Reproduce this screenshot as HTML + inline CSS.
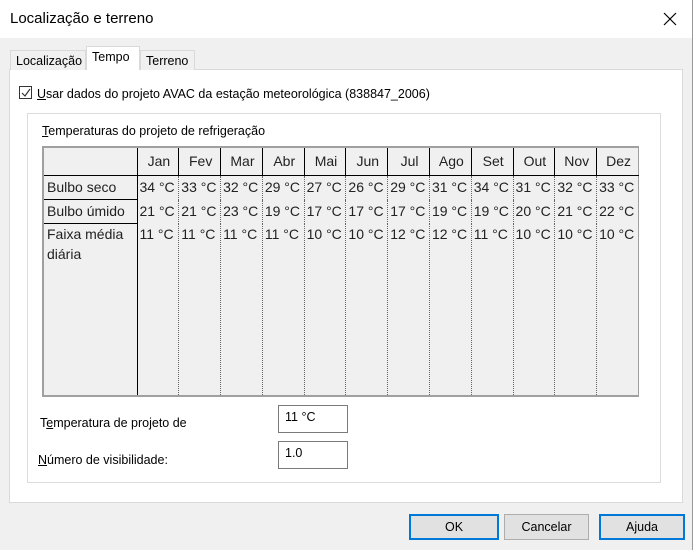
<!DOCTYPE html>
<html><head><style>
*{box-sizing:border-box;margin:0;padding:0}
body{width:693px;height:550px;background:#f0f0f0;font-family:"Liberation Sans",sans-serif;position:relative;overflow:hidden;color:#000}
.abs{position:absolute}
.title{left:0;top:0;width:693px;height:38px;background:#fff;font-size:15px;padding:10px 0 0 10px}
.tab{top:48px;height:22px;border:1px solid #d9d9d9;border-bottom:none;background:#f0f0f0;font-size:12.5px;padding:3px 0 0 5px}
.pane{left:9px;top:69px;width:674px;height:434px;background:#fff;border:1px solid #d9d9d9}
.grp{left:27px;top:113px;width:634px;height:370px;border:1px solid #dcdcdc}
table{position:absolute;left:42px;top:146px;width:597px;height:251px;border-collapse:collapse;background:#f0f0f0;border:2px solid #a0a0a0;border-right:1px solid #a0a0a0;font-size:14px;color:#222;table-layout:fixed}
td{border-left:1px dotted #666;padding:0 0 0 2px;vertical-align:top;white-space:nowrap;height:24px;line-height:22px}
tr.h td{border-left:1px solid #000;border-bottom:1.5px solid #000;text-align:center;height:27px;line-height:27px}
td.f{border-left:none;border-right:1.5px solid #000;border-bottom:1.5px solid #000;padding-left:3px}
tr.last td{height:auto;line-height:20px;border-bottom:none}
tr.last td.f{border-bottom:none}
.inp{width:70px;height:28px;border:1px solid #7a7a7a;background:#fff;font-size:12.5px;padding:4px 0 0 6px}
.btn{top:514px;height:26px;background:#e1e1e1;border:1px solid #adadad;font-size:12.5px;text-align:center;line-height:24px}
.btn.b{border:2px solid #0078d7;line-height:22px}
.lbl{font-size:12.5px}
</style></head><body>
<div class="abs title">Localização e terreno</div>
<svg class="abs" style="left:663px;top:12px" width="14" height="14"><path d="M1 1L13 13M13 1L1 13" stroke="#000" stroke-width="1.2"/></svg>
<div class="abs" style="left:692px;top:0;width:1px;height:550px;background:#999"></div>
<div class="abs pane"></div>
<div class="abs tab" style="left:10px;width:76px;top:50px;height:20px">Localização</div>
<div class="abs tab" style="left:86px;width:54px;top:46px;height:24px;background:#fff;padding-top:3px">Tempo</div>
<div class="abs tab" style="left:140px;width:55px;top:50px;height:20px">Terreno</div>
<div class="abs" style="left:19px;top:86px;width:13px;height:13px;border:1px solid #333;background:#fff"></div>
<svg class="abs" style="left:20px;top:87px" width="12" height="12"><path d="M2 6L5 9L10 2" stroke="#333" stroke-width="1.2" fill="none"/></svg>
<div class="abs lbl" style="left:37px;top:87px"><u>U</u>sar dados do projeto AVAC da estação meteorológica (838847_2006)</div>
<div class="abs grp"></div>
<div class="abs lbl" style="left:42px;top:124px"><u>T</u>emperaturas do projeto de refrigeração</div>
<table>
<colgroup><col style="width:94px"><col span="12"></colgroup>
<tr class="h"><td class="f"></td><td>Jan</td><td>Fev</td><td>Mar</td><td>Abr</td><td>Mai</td><td>Jun</td><td>Jul</td><td>Ago</td><td>Set</td><td>Out</td><td>Nov</td><td>Dez</td></tr>
<tr><td class="f">Bulbo seco</td><td>34 °C</td><td>33 °C</td><td>32 °C</td><td>29 °C</td><td>27 °C</td><td>26 °C</td><td>29 °C</td><td>31 °C</td><td>34 °C</td><td>31 °C</td><td>32 °C</td><td>33 °C</td></tr>
<tr><td class="f">Bulbo úmido</td><td>21 °C</td><td>21 °C</td><td>23 °C</td><td>19 °C</td><td>17 °C</td><td>17 °C</td><td>17 °C</td><td>19 °C</td><td>19 °C</td><td>20 °C</td><td>21 °C</td><td>22 °C</td></tr>
<tr class="last"><td class="f">Faixa média<br>diária</td><td>11 °C</td><td>11 °C</td><td>11 °C</td><td>11 °C</td><td>10 °C</td><td>10 °C</td><td>12 °C</td><td>12 °C</td><td>11 °C</td><td>10 °C</td><td>10 °C</td><td>10 °C</td></tr>
</table>
<div class="abs lbl" style="left:40px;top:416px">T<u>e</u>mperatura de projeto de</div>
<div class="abs inp" style="left:278px;top:405px">11 °C</div>
<div class="abs lbl" style="left:38px;top:453px"><u>N</u>úmero de visibilidade:</div>
<div class="abs inp" style="left:278px;top:441px">1.0</div>
<div class="abs btn b" style="left:409px;width:90px">OK</div>
<div class="abs btn" style="left:504px;width:85px">Cancelar</div>
<div class="abs btn b" style="left:599px;width:86px">Ajuda</div>
</body></html>
